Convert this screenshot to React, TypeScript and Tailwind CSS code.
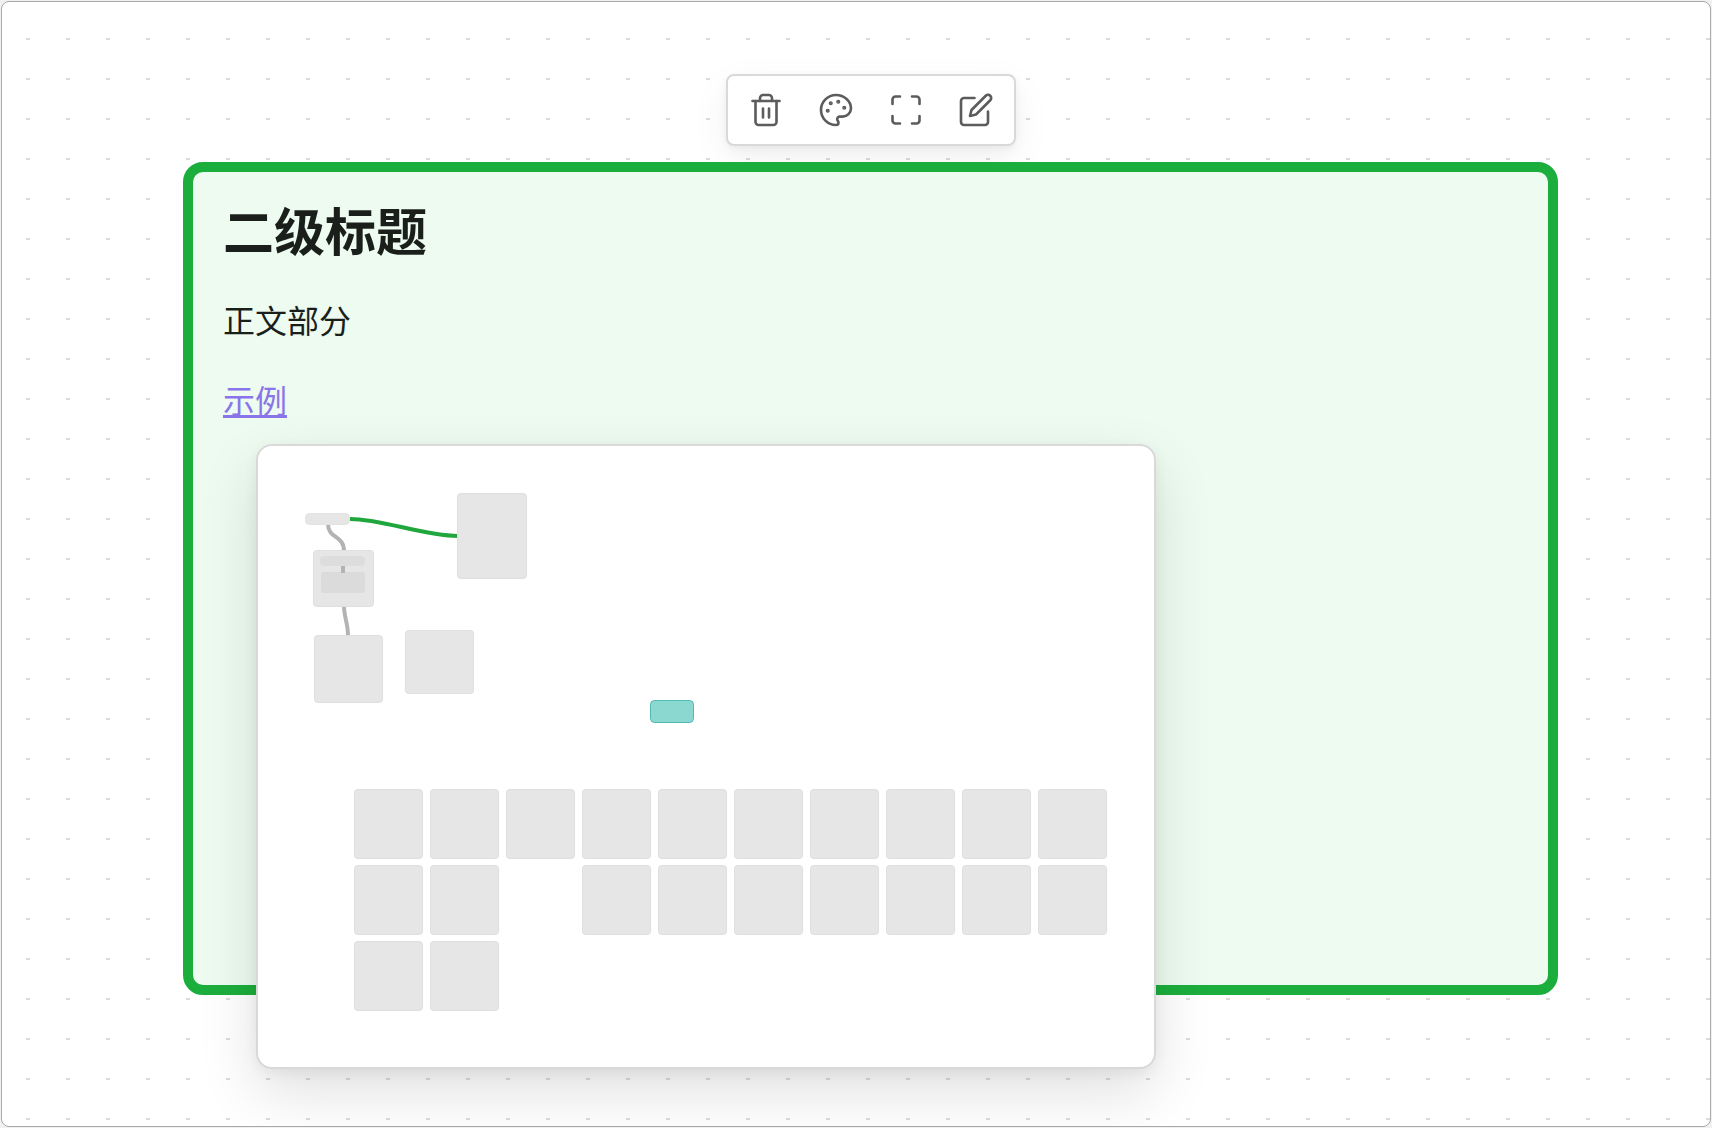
import type { ReactNode } from "react";
import { Maximize } from "lucide-react";

const TILE_WIDTH = 68;
const TILE_HEIGHT = 69;
const PITCH = 76;

// Columns that hold a card, one list per row
const GRID_ROWS = [
  [0, 1, 2, 3, 4, 5, 6, 7, 8, 9],
  [0, 1, 3, 4, 5, 6, 7, 8, 9],
  [0, 1],
];

export default function App() {
  return (
    <div className="flex min-h-screen bg-[#f1f1f1] p-px font-['Liberation_Sans','Noto_Sans_CJK_SC',sans-serif] text-[#1a1f1b]">
      <main className="flex grow flex-col overflow-hidden rounded-lg border border-[#a9a9a9] bg-white bg-[radial-gradient(3px_1px_at_center,#dcdcdc_75%,transparent)] bg-[length:40px_40px] bg-[position:6px_17px] pt-18 pr-[152px] pb-[131px] pl-[181px]">
        <CardMenu />
        <article className="relative mt-4 grow rounded-[20px] border-10 border-[#1cae3d] bg-[#edfbf0] px-[30px] py-8">
          <h2 className="mb-[34px] text-[51px] leading-[60px] font-bold">
            二级标题
          </h2>
          <p className="mb-8 text-[32px] leading-12">正文部分</p>
          <p className="text-[32px] leading-12">
            <a
              href="#example"
              className="text-[#8a75e8] underline decoration-3 underline-offset-2"
            >
              示例
            </a>
          </p>
          <LinkPreview />
        </article>
      </main>
    </div>
  );
}

function CardMenu() {
  return (
    <div
      role="toolbar"
      className="flex gap-[34px] self-center rounded-lg border-2 border-[#d9d9d9] bg-white px-5 py-4 text-[#5c5c5c] shadow-[0_2px_4px_rgba(0,0,0,0.03),0_6px_14px_rgba(0,0,0,0.04),0_12px_40px_rgba(0,0,0,0.05)]"
    >
      <MenuButton label="Remove">
        <TrashIcon />
      </MenuButton>
      <MenuButton label="Set color">
        <PaletteIcon />
      </MenuButton>
      <MenuButton label="Zoom to selection">
        <Maximize className="size-9" strokeWidth={1.75} />
      </MenuButton>
      <MenuButton label="Edit">
        <EditIcon />
      </MenuButton>
    </div>
  );
}

function MenuButton({
  label,
  children,
}: {
  label: string;
  children: ReactNode;
}) {
  return (
    <button type="button" aria-label={label} className="size-9">
      {children}
    </button>
  );
}

function TrashIcon() {
  return (
    <svg
      viewBox="0 0 24 24"
      className="size-9 fill-none stroke-current stroke-[1.75]"
      strokeLinecap="round"
      strokeLinejoin="round"
    >
      <path d="M3 6h18" />
      <path d="M19 6v14c0 1-1 2-2 2H7c-1 0-2-1-2-2V6" />
      <path d="M8 6V4c0-1 1-2 2-2h4c1 0 2 1 2 2v2" />
      <path d="M10 11v6M14 11v6" />
    </svg>
  );
}

function PaletteIcon() {
  return (
    <svg
      viewBox="0 0 24 24"
      className="size-9 fill-none stroke-current stroke-[1.75]"
      strokeLinecap="round"
      strokeLinejoin="round"
    >
      <circle cx="13.5" cy="6.5" r=".5" fill="currentColor" />
      <circle cx="17.5" cy="10.5" r=".5" fill="currentColor" />
      <circle cx="8.5" cy="7.5" r=".5" fill="currentColor" />
      <circle cx="6.5" cy="12.5" r=".5" fill="currentColor" />
      <path d="M12 2C6.5 2 2 6.5 2 12s4.5 10 10 10c.926 0 1.648-.746 1.648-1.688 0-.437-.18-.835-.437-1.125-.29-.289-.438-.652-.438-1.125a1.64 1.64 0 0 1 1.668-1.668h1.996c3.051 0 5.555-2.503 5.555-5.554C21.965 6.012 17.461 2 12 2z" />
    </svg>
  );
}

function EditIcon() {
  return (
    <svg
      viewBox="0 0 24 24"
      className="size-9 fill-none stroke-current stroke-[1.75]"
      strokeLinecap="round"
      strokeLinejoin="round"
    >
      <path d="M11 4H4a2 2 0 0 0-2 2v14a2 2 0 0 0 2 2h14a2 2 0 0 0 2-2v-7" />
      <path d="M18.5 2.5a2.12 2.12 0 0 1 3 3L12 15l-4 1 1-4Z" />
    </svg>
  );
}

function LinkPreview() {
  return (
    <div className="absolute top-[272px] left-[63px] rounded-2xl border-2 border-[#d9d9d9] bg-white shadow-[0_4px_14px_rgba(0,0,0,0.06),0_24px_60px_rgba(0,0,0,0.12)]">
      <svg width="896" height="621" viewBox="-1 -1 896 621" className="block">
        {/* Edges */}
        <g fill="none" strokeWidth="4" stroke="#b3b3b3">
          <path d="M91 72C124 72 164 89 199 89" stroke="#1fa63c" />
          <path d="M69 77C69 92 85 88 85 104" />
          <path d="M85 159C85 170 89 176 89 189" />
        </g>

        {/* Cards */}
        <g fill="#e6e6e6" stroke="#dfdfdf">
          <rect x="46.5" y="66.5" width="44" height="11" rx="4" stroke="#e3e3e3" />
          <rect x="198.5" y="46.5" width="69" height="85" rx="3" />
          <rect x="54.5" y="103.5" width="60" height="56" rx="3" />
          <rect x="55.5" y="188.5" width="68" height="67" rx="3" />
          <rect x="146.5" y="183.5" width="68" height="63" rx="3" />
          {GRID_ROWS.map((columns, row) =>
            columns.map((column) => (
              <rect
                key={`${row}-${column}`}
                x={95.5 + column * PITCH}
                y={342.5 + row * PITCH}
                width={TILE_WIDTH}
                height={TILE_HEIGHT}
                rx="3"
              />
            )),
          )}
        </g>

        {/* Cards inside the group */}
        <rect x="61" y="109" width="45" height="10" rx="4" fill="#dddddd" />
        <rect x="62" y="125" width="44" height="21" rx="3" fill="#dbdbdb" />
        <path d="M84 119v7" stroke="#b3b3b3" strokeWidth="4" />

        <rect
          x="391.5"
          y="253.5"
          width="43"
          height="22"
          rx="4"
          fill="#8ad8d0"
          stroke="#52bab4"
        />
      </svg>
    </div>
  );
}
